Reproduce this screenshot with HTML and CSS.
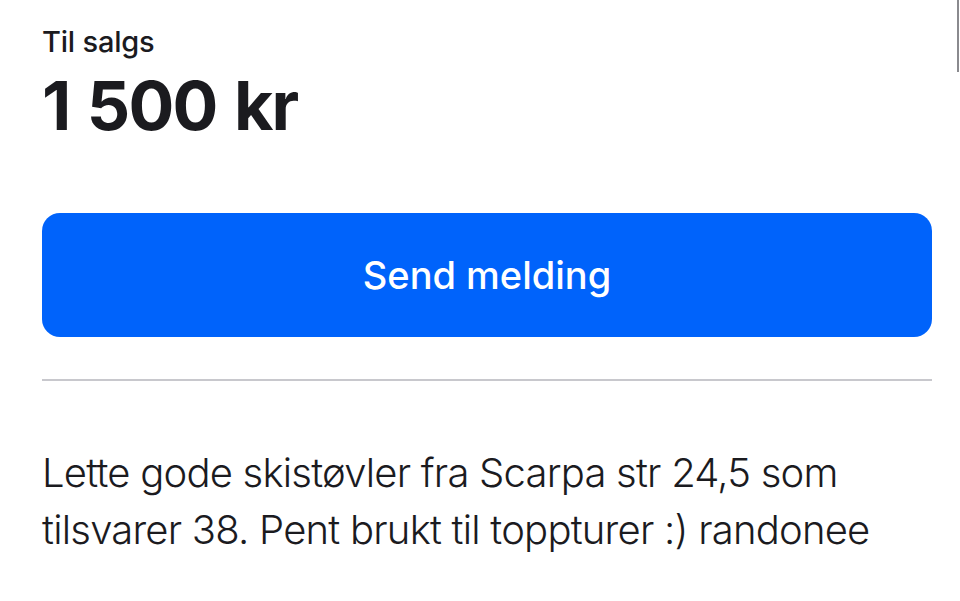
FILE: index.html
```html
<!DOCTYPE html>
<html lang="no">
<head>
<meta charset="utf-8">
<link rel="stylesheet" href="styles.css">
<title>Til salgs</title>
</head>
<body>
<div class="scroll-indicator"></div>
<main class="ad">
  <div class="price-block">
    <div class="label">Til salgs</div>
    <div class="price">1 500 kr</div>
  </div>
  <button class="send-btn" type="button">Send melding</button>
  <hr class="divider">
  <p class="description">Lette gode skistøvler fra Scarpa str 24,5 som tilsvarer 38. Pent brukt til toppturer :) randonee</p>
</main>
</body>
</html>
```
FILE: styles.css
```css
html, body {
  margin: 0;
  padding: 0;
  background: #ffffff;
}
body {
  font-family: Inter, "Noto Sans", sans-serif;
  color: #1b1b1f;
  width: 960px;
  height: 601px;
  overflow: hidden;
  position: relative;
}
.scroll-indicator {
  position: absolute;
  top: 0;
  right: 1px;
  width: 2px;
  height: 72px;
  background: #8a8a8e;
}
.ad {
  padding: 24px 28px 0 42px;
  display: flex;
  flex-direction: column;
}
.price-block {
  display: flex;
  flex-direction: column;
}
.label {
  font-size: 29px;
  line-height: 36px;
  font-weight: 500;
  letter-spacing: -0.2px;
}
.price {
  margin-top: 5px;
  font-size: 68px;
  line-height: 80px;
  font-weight: 700;
  letter-spacing: -1.8px;
  word-spacing: 3px;
}
.send-btn {
  margin-top: 68px;
  height: 124px;
  border: none;
  border-radius: 18px;
  background: #0063fb;
  color: #ffffff;
  font-family: inherit;
  font-size: 38px;
  font-weight: 500;
  letter-spacing: 0;
  display: flex;
  align-items: center;
  justify-content: center;
  padding: 0;
}
.divider {
  margin: 42px 0 0 0;
  border: none;
  height: 2px;
  background: #c8c8cd;
}
.description {
  margin: 63px 0 0 0;
  font-size: 40px;
  line-height: 57px;
  font-weight: 300;
  letter-spacing: -0.78px;
}
```
